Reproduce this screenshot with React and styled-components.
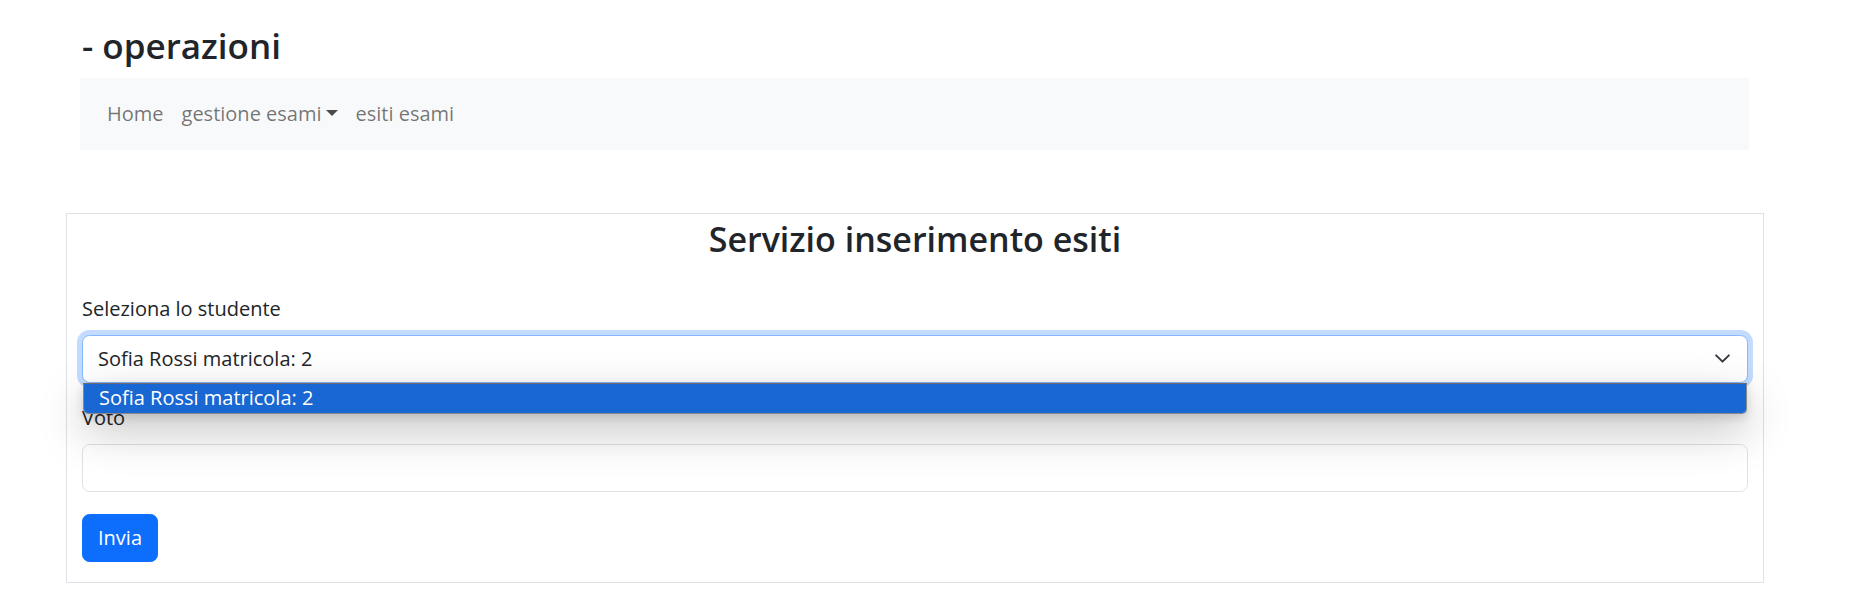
import styled, { createGlobalStyle } from "styled-components";

const GlobalStyle = createGlobalStyle`
  body {
    margin: 0;
    background: #fff;
    color: #212529;
    font-family: "Open Sans", "Noto Sans", sans-serif;
    font-size: 20px;
    line-height: 1.5;
  }
  * {
    box-sizing: border-box;
  }
`;

const Header = styled.header`
  padding: 25px 103px 0 80px;
`;

const PageTitle = styled.h3`
  margin: 0 0 11px 2px;
  font-size: 35px;
  font-weight: 600;
  line-height: 1.2;
`;

const Navbar = styled.nav`
  display: flex;
  align-items: center;
  height: 72px;
  padding: 0 18px;
  background-color: #f8f9fa;
`;

const NavLink = styled.a`
  padding: 0 9px;
  color: rgba(0, 0, 0, 0.55);
  text-decoration: none;
  cursor: pointer;
  &::after {
    content: ${({ $toggle }) => ($toggle ? '""' : "none")};
    display: inline-block;
    margin-left: 0.2em;
    vertical-align: 0.255em;
    border-top: 0.3em solid rgba(0, 0, 0, 0.7);
    border-right: 0.3em solid transparent;
    border-left: 0.3em solid transparent;
  }
`;

const Card = styled.main`
  margin: 63px 88px 0 66px;
  padding: 0 15px 20px;
  border: 1px solid #dee2e6;
`;

const CardTitle = styled.h3`
  margin: 4px 0 34px;
  text-align: center;
  font-size: 34px;
  font-weight: 600;
  line-height: 1.235;
`;

const Field = styled.div`
  margin-bottom: 20px;
`;

const Label = styled.label`
  display: block;
  margin-bottom: 11px;
`;

const SelectWrap = styled.div`
  position: relative;
`;

const SelectBox = styled.div`
  display: flex;
  align-items: center;
  justify-content: space-between;
  height: 48px;
  padding: 0 16px 0 15px;
  border: 1px solid #86b7fe;
  border-radius: 7.5px;
  background: #fff;
  box-shadow: 0 0 0 5px rgba(13, 110, 253, 0.25);
`;

const Chevron = styled.svg`
  width: 17px;
  height: 17px;
  color: #343a40;
`;

const OptionList = styled.ul`
  position: absolute;
  top: 100%;
  left: 1px;
  right: 1px;
  z-index: 2;
  margin: 0;
  padding: 0;
  list-style: none;
  border: 1px solid #8a8a8a;
  border-top-color: #6b6b6b;
  border-radius: 0 0 5px 5px;
  background: #fff;
  box-shadow: 0 16px 44px rgba(0, 0, 0, 0.26), 0 4px 10px rgba(0, 0, 0, 0.14);
  overflow: hidden;
`;

const Option = styled.li`
  height: 29px;
  padding: 0 15px;
  line-height: 28px;
  color: ${({ $active }) => ($active ? "#fff" : "#212529")};
  background: ${({ $active }) => ($active ? "#1967d2" : "transparent")};
`;

const TextInput = styled.input`
  display: block;
  width: 100%;
  height: 48px;
  padding: 0 15px;
  font: inherit;
  border: 1px solid #dee2e6;
  border-radius: 7.5px;
  background: #fff;
`;

const SubmitButton = styled.button`
  height: 48px;
  padding: 0 15px;
  font: inherit;
  color: #fff;
  background-color: #0d6efd;
  border: 1px solid #0d6efd;
  border-radius: 7.5px;
  cursor: pointer;
`;

const ButtonRow = styled.div`
  padding-top: 2px;
`;

export default function App() {
  const studenti = [{ nome: "Sofia Rossi", matricola: 2 }];

  return (
    <>
      <GlobalStyle />
      <Header>
        <PageTitle>- operazioni</PageTitle>
        <Navbar>
          <NavLink>Home</NavLink>
          <NavLink $toggle>gestione esami</NavLink>
          <NavLink>esiti esami</NavLink>
        </Navbar>
      </Header>
      <Card>
        <CardTitle>Servizio inserimento esiti</CardTitle>
        <Field>
          <Label>Seleziona lo studente</Label>
          <SelectWrap>
            <SelectBox>
              <span>Sofia Rossi matricola: 2</span>
              <Chevron viewBox="0 0 16 16" fill="none">
                <path
                  d="m2 5 6 6 6-6"
                  stroke="currentColor"
                  strokeWidth="1.8"
                  strokeLinecap="round"
                  strokeLinejoin="round"
                />
              </Chevron>
            </SelectBox>
            <OptionList>
              {studenti.map((s) => (
                <Option key={s.matricola} $active>
                  {s.nome} matricola: {s.matricola}
                </Option>
              ))}
            </OptionList>
          </SelectWrap>
        </Field>
        <Field>
          <Label>Voto</Label>
          <TextInput type="text" />
        </Field>
        <ButtonRow>
          <SubmitButton type="submit">Invia</SubmitButton>
        </ButtonRow>
      </Card>
    </>
  );
}
